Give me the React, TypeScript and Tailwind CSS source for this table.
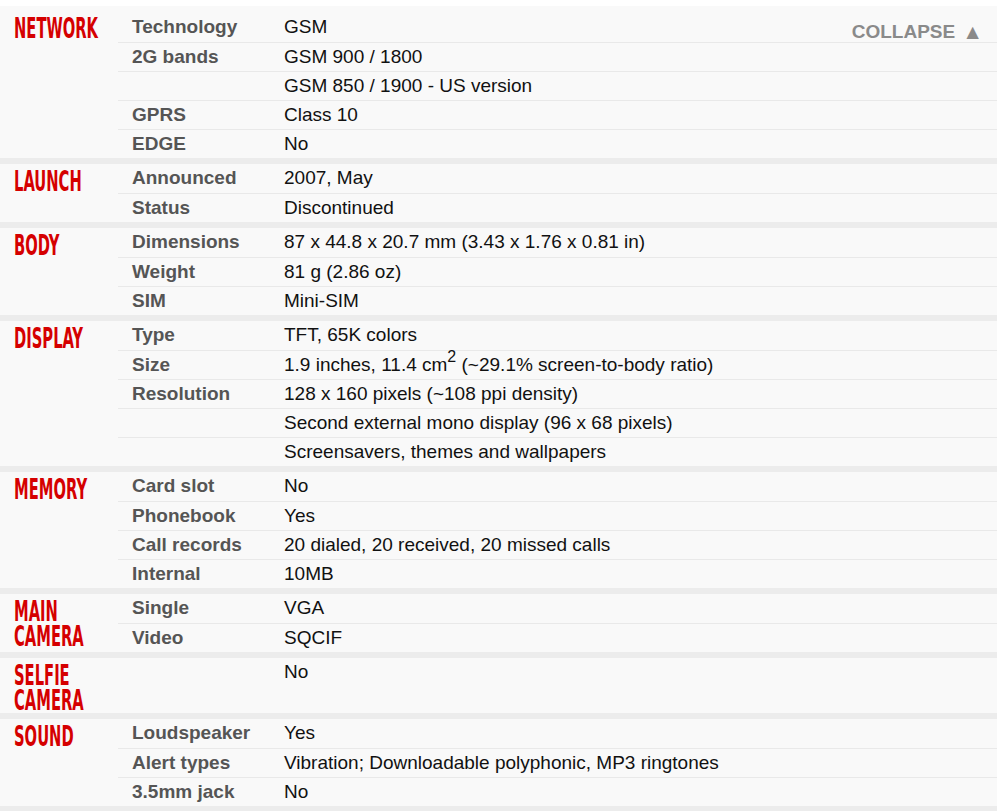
import React from 'react';

type Row = { label: string; value: React.ReactNode };
type Section = { title: string[]; rows: Row[] };

const sections: Section[] = [
  {
    title: ['NETWORK'],
    rows: [
      { label: 'Technology', value: 'GSM' },
      { label: '2G bands', value: 'GSM 900 / 1800' },
      { label: '', value: 'GSM 850 / 1900 - US version' },
      { label: 'GPRS', value: 'Class 10' },
      { label: 'EDGE', value: 'No' },
    ],
  },
  {
    title: ['LAUNCH'],
    rows: [
      { label: 'Announced', value: '2007, May' },
      { label: 'Status', value: 'Discontinued' },
    ],
  },
  {
    title: ['BODY'],
    rows: [
      { label: 'Dimensions', value: '87 x 44.8 x 20.7 mm (3.43 x 1.76 x 0.81 in)' },
      { label: 'Weight', value: '81 g (2.86 oz)' },
      { label: 'SIM', value: 'Mini-SIM' },
    ],
  },
  {
    title: ['DISPLAY'],
    rows: [
      { label: 'Type', value: 'TFT, 65K colors' },
      {
        label: 'Size',
        value: (
          <>
            1.9 inches, 11.4 cm
            <sup className="relative -top-[2px] text-[16px] leading-none align-super">2</sup> (~29.1%
            screen-to-body ratio)
          </>
        ),
      },
      { label: 'Resolution', value: '128 x 160 pixels (~108 ppi density)' },
      { label: '', value: 'Second external mono display (96 x 68 pixels)' },
      { label: '', value: 'Screensavers, themes and wallpapers' },
    ],
  },
  {
    title: ['MEMORY'],
    rows: [
      { label: 'Card slot', value: 'No' },
      { label: 'Phonebook', value: 'Yes' },
      { label: 'Call records', value: '20 dialed, 20 received, 20 missed calls' },
      { label: 'Internal', value: '10MB' },
    ],
  },
  {
    title: ['MAIN', 'CAMERA'],
    rows: [
      { label: 'Single', value: 'VGA' },
      { label: 'Video', value: 'SQCIF' },
    ],
  },
  {
    title: ['SELFIE', 'CAMERA'],
    rows: [{ label: '', value: 'No' }],
  },
  {
    title: ['SOUND'],
    rows: [
      { label: 'Loudspeaker', value: 'Yes' },
      { label: 'Alert types', value: 'Vibration; Downloadable polyphonic, MP3 ringtones' },
      { label: '3.5mm jack', value: 'No' },
    ],
  },
];

const SpecSection: React.FC<{ section: Section; first: boolean }> = ({ section, first }) => {
  return (
    <div className={`relative flex border-b-[6px] border-[#ececec] ${first ? 'pt-[7px]' : ''}`}>
      {/* Section header */}
      <div className={`w-[118px] shrink-0 pl-[14px] ${first ? 'pt-[3px]' : 'pt-[5px]'}`}>
        <div
          className="origin-left scale-x-[0.585] whitespace-nowrap text-[28px] font-bold leading-[25px] text-[#d50000]"
          style={{ fontFamily: '"DejaVu Sans Condensed", "Liberation Sans Narrow", "Liberation Sans", sans-serif' }}
        >
          {section.title.map((t, i) => (
            <React.Fragment key={t}>
              {i > 0 && <br />}
              {t}
            </React.Fragment>
          ))}
        </div>
      </div>

      {/* Rows */}
      <div className="flex-1">
        {section.rows.map((r, i) => (
          <div
            key={i}
            className={`flex h-[29px] items-center ${i > 0 ? 'border-t border-[#e9e9e9]' : ''}`}
          >
            <div className="w-[166px] shrink-0 pl-[14px] font-bold text-[#555555]">{r.label}</div>
            <div className="flex-1 whitespace-nowrap text-[#111111]">{r.value}</div>
          </div>
        ))}
      </div>

      {first && (
        <div className="absolute right-[14px] top-[15px] flex items-center gap-[7px] text-[19px] font-bold leading-none text-[#8a8a8a]">
          <span>COLLAPSE</span>
          <span className="text-[21px]">▲</span>
        </div>
      )}
    </div>
  );
};

export default function App() {
  return (
    <div
      className="min-h-[811px] bg-white pt-[6px] text-[19px]"
      style={{ fontFamily: '"Liberation Sans", Arial, sans-serif' }}
    >
      <div className="w-[997px] bg-[#f9f9f9]">
        {sections.map((s, i) => (
          <SpecSection key={s.title.join(' ')} section={s} first={i === 0} />
        ))}
      </div>
    </div>
  );
}
